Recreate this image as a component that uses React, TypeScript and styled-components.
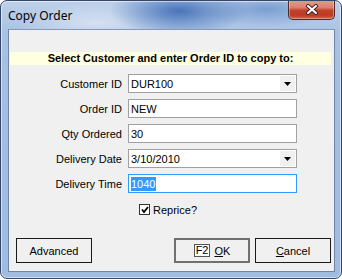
import styled, { createGlobalStyle } from "styled-components";

const GlobalStyle = createGlobalStyle`
    html, body {
        margin: 0;
        padding: 0;
        background: #ffffff;
    }
`

const fields = [
    { label: "Customer ID", value: "DUR100", combo: true },
    { label: "Order ID", value: "NEW" },
    { label: "Qty Ordered", value: "30" },
    { label: "Delivery Date", value: "3/10/2010", combo: true },
    { label: "Delivery Time", value: "1040", focused: true },
];

const App = () => {
    return (
        <>
            <GlobalStyle />
            <Window>
                <TitleBar>
                    <Title>Copy Order</Title>
                    <CloseButton>
                        <svg width="14" height="11" viewBox="0 0 14 11">
                            <path d="M3 2 L11 9 M11 2 L3 9" stroke="#3a2a2a" strokeWidth="4" strokeLinecap="round" />
                            <path d="M3 2 L11 9 M11 2 L3 9" stroke="#ffffff" strokeWidth="2" strokeLinecap="round" />
                        </svg>
                    </CloseButton>
                </TitleBar>
                <Client>
                    <Banner>Select Customer and enter Order ID to copy to:</Banner>
                    <Form>
                        {fields.map(f => (
                            <FieldRow key={f.label}>
                                <Label>{f.label}</Label>
                                <Field $focused={f.focused}>
                                    {f.focused ? <Selected>{f.value}</Selected> : <span>{f.value}</span>}
                                    {f.combo && (
                                        <ComboArrow>
                                            <svg width="7" height="4" viewBox="0 0 7 4">
                                                <path d="M0 0 H7 L3.5 4 Z" fill="#000" />
                                            </svg>
                                        </ComboArrow>
                                    )}
                                </Field>
                            </FieldRow>
                        ))}
                    </Form>
                    <CheckRow>
                        <CheckBox>
                            <svg width="8" height="8" viewBox="0 0 8 8">
                                <path d="M1 3.5 L3 6 L7 1" stroke="#000" strokeWidth="1.8" fill="none" />
                            </svg>
                        </CheckBox>
                        Reprice?
                    </CheckRow>
                    <ButtonRow>
                        <Button>Advanced</Button>
                        <Spacer />
                        <Button $default>
                            <KeyCap>F2</KeyCap>
                            <span><u>O</u>K</span>
                        </Button>
                        <Button><span><u>C</u>ancel</span></Button>
                    </ButtonRow>
                </Client>
            </Window>
        </>
    )
}

export default App;

const Window = styled.div`
    box-sizing: border-box;
    width: 342px;
    height: 279px;
    display: flex;
    flex-direction: column;
    border: 1px solid #34476a;
    border-radius: 7px;
    background:
        radial-gradient(ellipse 70px 24px at 178px 10px, rgba(66, 112, 184, 0.95), rgba(66, 112, 184, 0) 100%),
        radial-gradient(ellipse 80px 20px at 95px 22px, rgba(230, 236, 246, 0.7), rgba(230, 236, 246, 0) 100%),
        radial-gradient(ellipse 70px 18px at 265px 8px, rgba(96, 138, 200, 0.7), rgba(96, 138, 200, 0) 100%),
        linear-gradient(180deg, #bdd0ea 0%, #a9c2e3 12%, #a3bee1 40%, #9fbbe0 100%);
    box-shadow: inset 0 0 0 1px rgba(255, 255, 255, 0.55);
    font-family: "Liberation Sans", Arial, sans-serif;
    font-size: 11px;
    color: #000;
    overflow: hidden;
`

const TitleBar = styled.div`
    height: 28px;
    display: flex;
    justify-content: space-between;
    align-items: flex-start;
    padding-left: 7px;
`

const Title = styled.div`
    font-family: "Noto Sans", "Open Sans", sans-serif;
    font-size: 12px;
    line-height: 14px;
    margin-top: 8px;
    color: #000;
`

const CloseButton = styled.div`
    box-sizing: border-box;
    width: 47px;
    height: 20px;
    margin-right: 6px;
    margin-top: -1px;
    display: flex;
    align-items: center;
    justify-content: center;
    border: 1px solid #4e2a26;
    border-top: none;
    border-radius: 0 0 5px 5px;
    background: linear-gradient(180deg, #e0a090 0%, #d6806c 40%, #c3402b 55%, #bd3b26 80%, #d06448 100%);
    box-shadow: inset 0 0 0 1px rgba(255, 255, 255, 0.35);
`

const Client = styled.div`
    flex: 1;
    display: flex;
    flex-direction: column;
    margin: 0 6px 6px 7px;
    padding: 22px 3px 8px 7px;
    background: #f0f0f0;
    border: 1px solid #6f85a8;
    border-top-color: #8799b6;
`

const Banner = styled.div`
    margin: 0 0 9px -6px;
    height: 13px;
    line-height: 13px;
    background: #ffffe1;
    text-align: center;
    font-weight: bold;
    font-size: 11px;
    white-space: nowrap;
`

const Form = styled.div`
    display: flex;
    flex-direction: column;
    gap: 6px;
`

const FieldRow = styled.div`
    display: grid;
    grid-template-columns: 113px 169px;
    column-gap: 6px;
    align-items: center;
    margin-left: -7px;
`

const Label = styled.div`
    text-align: right;
    white-space: nowrap;
`

const Field = styled.div<{ $focused?: boolean }>`
    box-sizing: border-box;
    height: 19px;
    display: flex;
    align-items: center;
    justify-content: space-between;
    padding: 0 1px 0 2px;
    background: #fff;
    border: 1px solid ${p => p.$focused ? "#3399ff" : "#a0a0a0"};
`

const Selected = styled.span`
    background: #3399ff;
    color: #fff;
    line-height: 14px;
    padding-right: 1px;
`

const ComboArrow = styled.div`
    width: 15px;
    height: 15px;
    display: flex;
    align-items: center;
    justify-content: center;
    background: #f0f0f0;
`

const CheckRow = styled.label`
    display: flex;
    align-items: center;
    gap: 3px;
    margin: 10px 0 0 123px;
    height: 13px;
`

const CheckBox = styled.span`
    box-sizing: border-box;
    width: 11px;
    height: 11px;
    display: flex;
    align-items: center;
    justify-content: center;
    background: #fff;
    border: 1px solid #333;
`

const ButtonRow = styled.div`
    margin-top: auto;
    display: flex;
    align-items: center;
    gap: 5px;
`

const Spacer = styled.div`
    flex: 1;
`

const Button = styled.div<{ $default?: boolean }>`
    box-sizing: border-box;
    width: 76px;
    height: 25px;
    display: flex;
    align-items: center;
    justify-content: center;
    gap: 4px;
    background: #f0f0f0;
    border: ${p => p.$default ? "2px solid #707070" : "1px solid #1a1a1a"};
    u {
        text-decoration: underline;
    }
`

const KeyCap = styled.span`
    box-sizing: border-box;
    height: 13px;
    padding: 0 1px;
    line-height: 11px;
    border: 1px solid #555;
    background: #fff;
`
